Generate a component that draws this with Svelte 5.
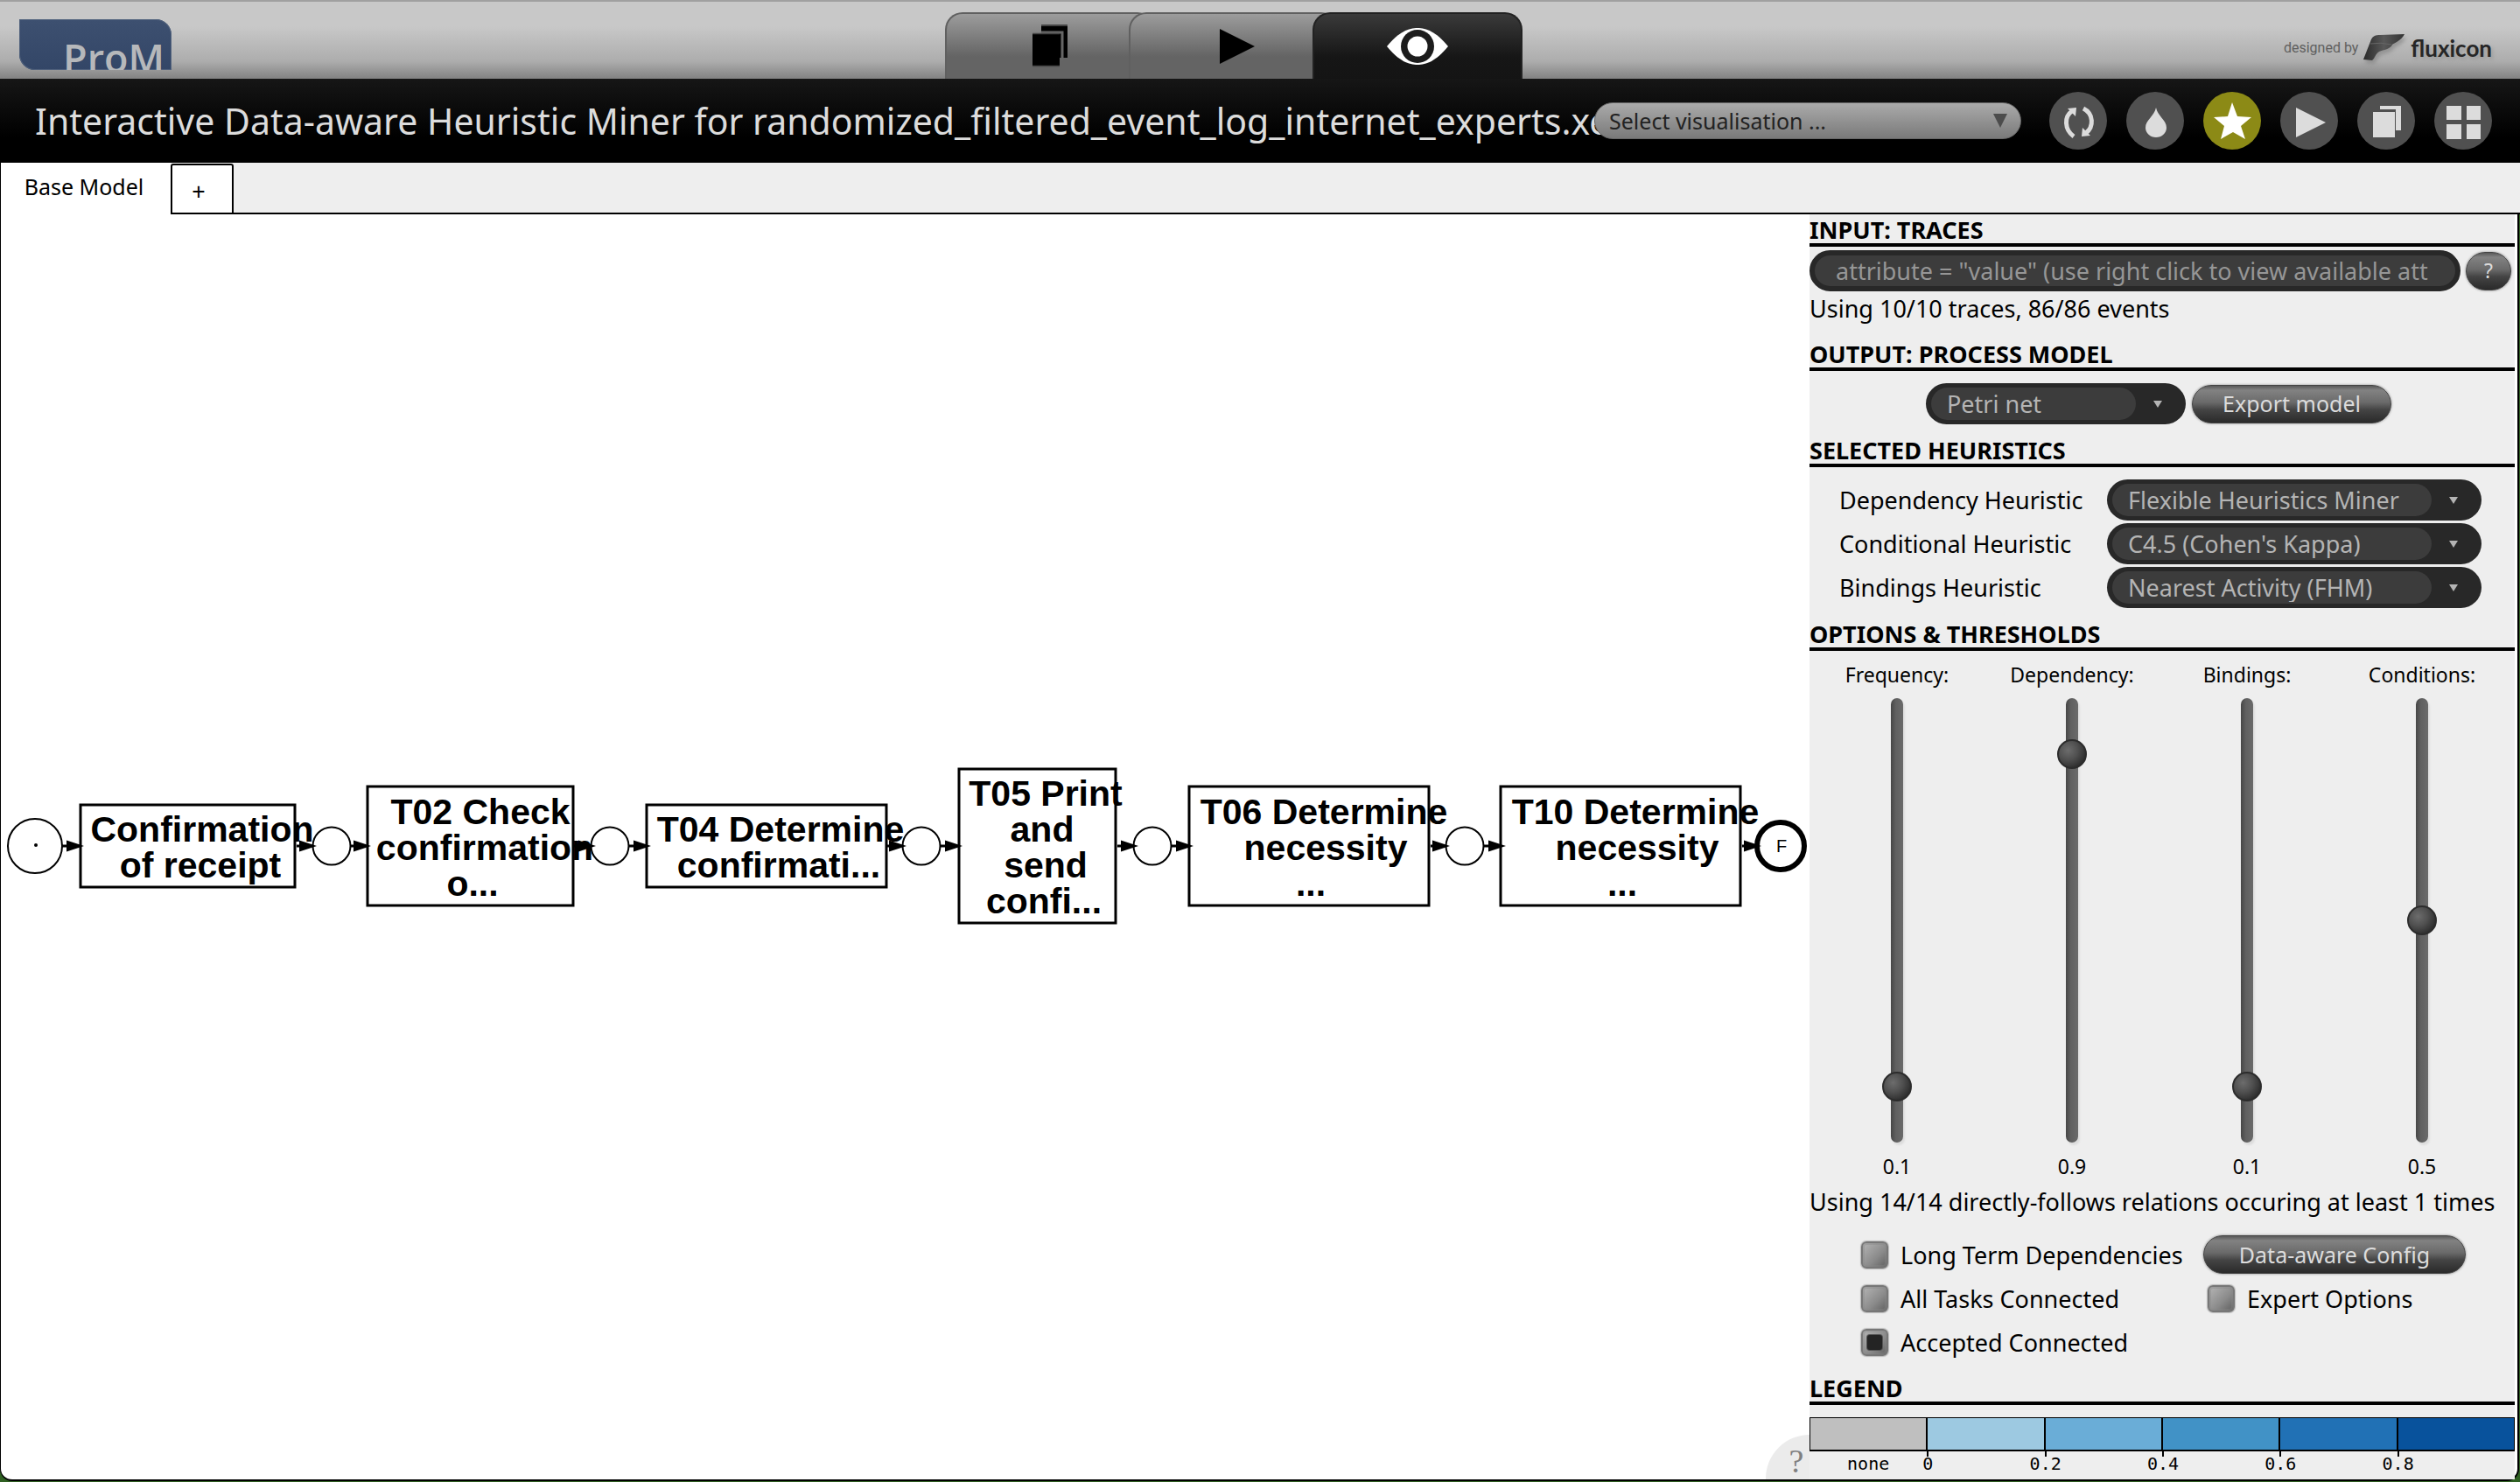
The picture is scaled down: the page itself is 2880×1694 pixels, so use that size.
<script>
  const viewTabs = [
    { id: 'workspace', label: 'Workspace' },
    { id: 'actions', label: 'Actions' },
    { id: 'views', label: 'Views' }
  ];
  let activeView = $state('views');

  const tools = ['Refresh', 'Recolour', 'Favourite', 'Run', 'Duplicate', 'Overview'];

  const heuristics = [
    { id: 'dep', label: 'Dependency Heuristic', value: 'Flexible Heuristics Miner' },
    { id: 'cond', label: 'Conditional Heuristic', value: "C4.5 (Cohen's Kappa)" },
    { id: 'bind', label: 'Bindings Heuristic', value: 'Nearest Activity (FHM)' }
  ];

  let thresholds = $state([
    { id: 'frequency', label: 'Frequency:', value: 0.1 },
    { id: 'dependency', label: 'Dependency:', value: 0.9 },
    { id: 'bindings', label: 'Bindings:', value: 0.1 },
    { id: 'conditions', label: 'Conditions:', value: 0.5 }
  ]);

  const legend = [
    { label: 'none', cls: 'l0' },
    { label: '0', cls: 'l1' },
    { label: '0.2', cls: 'l2' },
    { label: '0.4', cls: 'l3' },
    { label: '0.6', cls: 'l4' },
    { label: '0.8', cls: 'l5' }
  ];

  // Petri net: transitions as boxes, places as circles, on one horizontal axis.
  const axis = 99;
  const transitions = [
    { x: 91, w: 245, h: 94, lines: [['Confirmation', 230], ['of receipt', 228]] },
    { x: 419, w: 235, h: 136, lines: [['T02 Check', 548], ['confirmation', 553], ['o...', 539]] },
    { x: 738, w: 274, h: 94, lines: [['T04 Determine', 891], ['confirmati...', 889]] },
    { x: 1095, w: 179, h: 176, lines: [['T05 Print', 1194], ['and', 1190], ['send', 1194], ['confi...', 1192]] },
    { x: 1358, w: 274, h: 136, lines: [['T06 Determine', 1512], ['necessity', 1514], ['...', 1497]] },
    { x: 1714, w: 274, h: 136, lines: [['T10 Determine', 1868], ['necessity', 1870], ['...', 1853]] }
  ];
  const places = [378, 696, 1052, 1316, 1673];
  const arcs = [
    [70, 94], [338, 360], [400, 422], [655, 679], [718, 742], [1013, 1034],
    [1074, 1098], [1276, 1299], [1338, 1362], [1634, 1655], [1695, 1719], [1990, 2011]
  ];
  const baseline = (t, i) => axis - (t.lines.length * 41) / 2 + 36 + i * 41;
</script>

<div class="window">
  <header class="topbar">
    <div class="brand"><span>ProM</span></div>
    <nav class="views" aria-label="Views">
      {#each viewTabs as tab}
        <button
          class="view"
          class:active={activeView === tab.id}
          aria-label={tab.label}
          onclick={() => (activeView = tab.id)}
        >
          {#if tab.id === 'workspace'}
            <svg width="42" height="50" viewBox="0 0 42 50">
              <path d="M11 1h30v37h-30z" fill="#000" />
              <path d="M11 1h30" stroke="#444" stroke-width="2" />
              <path d="M11 9h24v32" fill="none" stroke="#666" stroke-width="3" />
              <path d="M1 11h31v36h-31z" fill="#000" />
              <path d="M1 47.500h31M1 10.500h31" stroke="#444" stroke-width="1.500" />
            </svg>
          {:else if tab.id === 'actions'}
            <svg width="50" height="42" viewBox="0 0 50 42"><path d="M9 1l40 20-40 20z" fill="#000" /></svg>
          {:else}
            <svg width="70" height="44" viewBox="0 0 70 44">
              <path d="M0 22C14 5 25 1 35 1s21 4 35 21C56 39 45 43 35 43S14 39 0 22z" fill="#fff" />
              <circle cx="35" cy="22" r="19" fill="#1c1c1c" />
              <circle cx="35" cy="22" r="11.500" fill="#fff" />
            </svg>
          {/if}
        </button>
      {/each}
    </nav>
    <div class="credit">
      <span>designed by</span>
      <svg width="50" height="34" viewBox="0 0 50 34">
        <defs>
          <linearGradient id="flag" x1="0" x2="1"><stop offset="0" stop-color="#2a2a2a" /><stop offset=".5" stop-color="#585858" /><stop offset="1" stop-color="#333" /></linearGradient>
        </defs>
        <path d="M10 7C12 3 15 2 20 2L48 1C44 9 36 11 34 13C32 18 24 19 19 21C15 23 14 29 11 31L1 30z" fill="url(#flag)" />
        <path d="M9 12q12-2 24 1" stroke="#666" fill="none" />
      </svg>
      <strong>fluxicon</strong>
    </div>
  </header>

  <div class="titlebar">
    <h1>Interactive Data-aware Heuristic Miner for randomized_filtered_event_log_internet_experts.xes</h1>
    <div class="visualisation">
      <select aria-label="Visualisation"><option>Select visualisation ...</option></select>
      <svg width="16" height="16" viewBox="0 0 16 16"><path d="M0 0h16l-8 16z" fill="#4c4c4c" /></svg>
    </div>
    <div class="tools">
      {#each tools as tool}
        <button class="tool" class:starred={tool === 'Favourite'} aria-label={tool}>
          <svg width="66" height="66" viewBox="0 0 66 66" fill="#dcdcdc">
            {#if tool === 'Refresh'}
              <path d="M28 51C17 43 17 28 26 22" fill="none" stroke="#dcdcdc" stroke-width="5" />
              <path d="M21 19l10-1-1 10z" />
              <path d="M39 19C51 25 51 40 42 47" fill="none" stroke="#dcdcdc" stroke-width="5" />
              <path d="M47 50l-10 1 1-10z" />
            {:else if tool === 'Recolour'}
              <path d="M34 18C36 28 46 32 46 41a12 11 0 0 1-24 0C22 32 32 28 34 18z" />
            {:else if tool === 'Favourite'}
              <path d="M33 12l6 16 16 1-12 10 5 15-14-8-14 8 4-15-12-10 16-1z" fill="#fff" />
            {:else if tool === 'Run'}
              <path d="M18 18l34 17-34 17z" />
            {:else if tool === 'Duplicate'}
              <path d="M26 16h24v28h-6v-24h-18z" />
              <path d="M18 23h25v29h-25z" />
            {:else}
              <path d="M14 16h17v16h-17zM37 16h16v16h-16zM14 37h17v17h-17zM37 37h16v17h-16z" />
            {/if}
          </svg>
        </button>
      {/each}
    </div>
  </div>

  <div class="modeltabs">
    <button class="modeltab">Base Model</button>
    <button class="addtab" aria-label="Add model">+</button>
    <div class="filler"></div>
  </div>

  <main class="workspace">
    <section class="canvas" aria-label="Process model">
      <svg class="net" viewBox="0 0 2067 200">
        <g fill="#fff" stroke="#000" stroke-width="2">
          <circle cx="39" cy={axis} r="31" />
          {#each places as cx}<circle {cx} cy={axis} r="21.500" />{/each}
        </g>
        <circle cx="40" cy="98" r="2" />
        <circle cx="2034" cy={axis} r="27" fill="#fff" stroke="#000" stroke-width="6" />
        <text class="final" x="2035" y="106">F</text>
        {#each transitions as t}
          <rect x={t.x} y={axis - t.h / 2} width={t.w} height={t.h} fill="#fff" stroke="#000" stroke-width="3" />
        {/each}
        {#each arcs as [from, to]}
          <path d="M{from} {axis}H{to - 8}" stroke="#000" stroke-width="3" />
          <path d="M{to + 1} {axis}l-20-6.500v13z" />
        {/each}
        {#each transitions as t}
          {#each t.lines as [line, x], i}
            <text class="task" {x} y={baseline(t, i)}>{line}</text>
          {/each}
        {/each}
      </svg>
      <button class="help">?</button>
    </section>

    <aside class="panel">
      <h2>INPUT: TRACES</h2>
      <div class="filter">
        <input type="text" aria-label="Trace filter" placeholder={'attribute = "value" (use right click to view available att'} />
        <button class="glossy round">?</button>
      </div>
      <p class="note">Using 10/10 traces, 86/86 events</p>

      <h2 class="wide">OUTPUT: PROCESS MODEL</h2>
      <div class="export">
        <div class="combo">
          <select aria-label="Output model"><option>Petri net</option></select>
          <svg width="12" height="10" viewBox="0 0 12 10"><path d="M1 1h10l-5 8z" fill="#b4b4b4" /></svg>
        </div>
        <button class="glossy">Export model</button>
      </div>

      <h2>SELECTED HEURISTICS</h2>
      <div class="heuristics">
        {#each heuristics as h}
          <label for={h.id}>{h.label}</label>
          <div class="combo">
            <select id={h.id}><option>{h.value}</option></select>
            <svg width="12" height="10" viewBox="0 0 12 10"><path d="M1 1h10l-5 8z" fill="#b4b4b4" /></svg>
          </div>
        {/each}
      </div>

      <h2>OPTIONS &amp; THRESHOLDS</h2>
      <div class="sliders">
        {#each thresholds as t}
          <div class="slider">
            <label for={t.id}>{t.label}</label>
            <input id={t.id} type="range" min="0" max="1" step="0.1" bind:value={t.value} />
            <output for={t.id}>{t.value.toFixed(1)}</output>
          </div>
        {/each}
      </div>
      <p class="relations">Using 14/14 directly-follows relations occuring at least 1 times</p>

      <div class="options">
        <label><input type="checkbox" />Long Term Dependencies</label>
        <button class="glossy">Data-aware Config</button>
        <label><input type="checkbox" />All Tasks Connected</label>
        <label class="expert"><input type="checkbox" />Expert Options</label>
        <label><input type="checkbox" checked />Accepted Connected</label>
      </div>

      <h2 class="legendtitle">LEGEND</h2>
      <div class="scale">
        {#each legend as item}<div class={item.cls}></div>{/each}
      </div>
      <div class="ticks">
        {#each legend as item}<div><span>{item.label}</span></div>{/each}
      </div>
    </aside>
  </main>
</div>

<style>
  :global(body) { margin: 0; }
  *, *::before { box-sizing: border-box; }
  button, select, input { font: inherit; border: 0; margin: 0; padding: 0; }
  .window {
    min-height: 100vh;
    display: flex;
    flex-direction: column;
    font-family: 'Noto Sans', 'Open Sans', sans-serif;
    font-size: 27px;
    line-height: 33px;
    color: #000;
    background: #2f6022;
  }

  .topbar {
    height: 90px;
    display: grid;
    grid-template-columns: 36fr auto 38fr;
    border-top: 2px solid #a0a0a0;
    background: linear-gradient(#c8c8c8 0, #c8c8c8 28px, #adadad 68px, #828282 88px);
  }
  .brand {
    align-self: start;
    width: 174px;
    height: 58px;
    margin: 20px 0 0 22px;
    padding: 19px 8px 0 0;
    overflow: hidden;
    border-radius: 0 18px 0 18px;
    background: linear-gradient(#3d5070, #334667);
    box-shadow: inset 0 0 0 1px #50617c;
    color: #b6b8bb;
    font: 600 45px/50px 'Open Sans', sans-serif;
    text-align: right;
  }
  .views { display: flex; align-items: flex-end; }
  .view {
    width: 240px;
    height: 76px;
    display: flex;
    align-items: center;
    justify-content: center;
    border: 2px solid #606060;
    border-bottom: 0;
    border-radius: 20px 20px 0 0;
    background: linear-gradient(#9c9c9c, #646464 66%, #646464);
  }
  .view + .view { margin-left: -30px; }
  .view.active { border-color: #222; background: linear-gradient(#3a3a3a, #161616 66%, #141414); }
  .credit {
    justify-self: end;
    align-self: start;
    display: flex;
    align-items: center;
    gap: 5px;
    margin: 36px 32px 0 0;
    color: #606060;
    font: 16px/34px Roboto, sans-serif;
  }
  .credit strong { font: 700 26px/32px Lato, sans-serif; color: #262626; text-shadow: 2px 3px 4px #8889; }
  .credit svg { filter: drop-shadow(2px 4px 2px #7778); }

  .titlebar {
    height: 96px;
    display: flex;
    align-items: center;
    padding: 0 32px 0 40px;
    background: linear-gradient(#161616, #000 70%);
  }
  h1 {
    flex: 1;
    min-width: 0;
    margin: 0;
    overflow: hidden;
    white-space: nowrap;
    color: #dcdcdc;
    font-size: 41px;
    font-weight: 400;
    line-height: 58px;
  }
  .visualisation {
    flex: 0 0 488px;
    position: relative;
    display: flex;
    align-items: center;
    height: 42px;
    margin-left: -12px;
    padding-right: 15px;
    border-radius: 21px;
    border: 1px solid #666;
    background: linear-gradient(#aaa, #7a7a7a);
  }
  .visualisation select {
    flex: 1;
    appearance: none;
    height: 40px;
    padding-left: 16px;
    background: none;
    color: #222;
    font-size: 25px;
  }
  .tools { display: flex; gap: 22px; margin-left: 32px; }
  .tool { width: 66px; height: 66px; border-radius: 50%; background: #505050; }
  .tool svg { display: block; }
  .tool.starred { background: #8c8a16; }

  .modeltabs { display: flex; height: 59px; background: #eee; }
  .modeltab {
    width: 195px;
    padding: 0 4px 4px 0;
    border-left: 1px solid #000;
    background: #fff;
    text-align: center;
    font-size: 25px;
  }
  .addtab {
    width: 72px;
    margin-top: 1px;
    padding: 4px 8px 0 0;
    border: 2px solid #000;
    border-radius: 3px 3px 0 0;
    background: #fff;
  }
  .filler { flex: 1; border-bottom: 2px solid #000; }

  .workspace {
    flex: 1;
    display: flex;
    padding-right: 3px;
    border: solid #000;
    border-width: 0 2px 2px 1px;
    border-radius: 0 0 14px 14px;
    background: #fff;
    margin: 0 1px 1px 0;
  }
  .canvas {
    flex: 1;
    min-width: 0;
    position: relative;
    display: flex;
    align-items: center;
    overflow: hidden;
  }
  .net { width: 100%; overflow: visible; }
  .task { font: 700 41px 'Liberation Sans', sans-serif; text-anchor: middle; }
  .final { font: 20px 'Liberation Sans', sans-serif; text-anchor: middle; }
  .help {
    position: absolute;
    right: 0;
    bottom: 0;
    width: 50px;
    height: 51px;
    padding: 8px 0 0 20px;
    border-radius: 50px 0 0 0;
    background: #ebebeb;
    color: #808080;
    font: 38px/40px 'Liberation Serif', serif;
  }

  .panel { flex: 0 0 806px; display: flex; flex-direction: column; background: #eee; }
  h2 {
    margin: 12px 0 0;
    padding-top: 2px;
    border-bottom: 4px solid #000;
    font-size: 27px;
    font-weight: 700;
    line-height: 31px;
  }
  h2:first-child { margin-top: 0; }
  h2.wide { margin-top: 18px; }
  h2.legendtitle { margin-top: 10px; }
  p { margin: 0; white-space: nowrap; }

  .filter { display: flex; align-items: center; gap: 6px; padding: 4px 4px 0 0; }
  .filter input {
    flex: 1;
    min-width: 0;
    height: 47px;
    padding: 0 24px;
    border: 6px solid #282828;
    border-radius: 24px;
    background: #3c3c3c;
  }
  .filter input::placeholder { color: #969696; opacity: 1; }
  .note { margin-top: 3px; }
  .glossy {
    height: 44px;
    padding: 0 36px;
    border: 1px solid #444;
    border-radius: 22px;
    background: linear-gradient(#5a5a5a, #828282 12%, #6a6a6a 45%, #444 65%, #2a2a2a);
    box-shadow: 0 0 2px 1px #bbb;
    color: #dcdcdc;
    font-size: 25px;
  }
  .glossy.round { width: 52px; padding: 0; font-size: 23px; }

  .combo {
    display: flex;
    align-items: center;
    gap: 19px;
    height: 47px;
    padding: 0 26px 0 6px;
    border-radius: 24px;
    background: #282828;
  }
  .combo select {
    flex: 1;
    min-width: 0;
    height: 37px;
    padding-left: 18px;
    appearance: none;
    border-radius: 19px;
    background: #3c3c3c;
    color: #b4b4b4;
  }
  .export { display: flex; align-items: center; justify-content: center; gap: 7px; padding: 14px 8px 0 0; }
  .export .combo { width: 297px; }
  .export .glossy { width: 228px; padding: 0; }
  .heuristics {
    display: grid;
    grid-template-columns: 306px 1fr;
    align-items: center;
    row-gap: 3px;
    padding: 14px 38px 0 34px;
  }

  .sliders { display: grid; grid-template-columns: repeat(4, 1fr); margin-top: 13px; padding-right: 6px; }
  .slider { display: flex; flex-direction: column; align-items: center; gap: 13px; font-size: 23px; line-height: 28px; }
  .slider input {
    appearance: none;
    writing-mode: vertical-lr;
    direction: rtl;
    width: 34px;
    height: 508px;
    background: none;
  }
  .slider input::-webkit-slider-runnable-track {
    width: 14px;
    height: 508px;
    border-radius: 7px;
    background: linear-gradient(90deg, #464646, #606060 40%, #6a6a6a);
    box-shadow: 2px 3px 2px #ddd;
  }
  .slider input::-webkit-slider-thumb {
    appearance: none;
    width: 34px;
    height: 34px;
    margin-left: -10px;
    border: 2px solid #2c2c2c;
    border-radius: 50%;
    background: radial-gradient(circle at 35% 35%, #6c6c6c, #505050 40%, #181818);
  }
  .relations { margin-top: 10px; }

  .options {
    display: grid;
    grid-template-columns: 391px 300px;
    grid-auto-rows: 50px;
    align-items: center;
    margin-top: 19px;
    padding-left: 59px;
  }
  .options label { display: flex; align-items: center; gap: 14px; white-space: nowrap; }
  .options .expert { padding-left: 5px; }
  .options .glossy { padding: 0; }
  .options input {
    appearance: none;
    display: grid;
    place-items: center;
    width: 31px;
    height: 31px;
    border: 2px solid #777;
    border-radius: 6px;
    background: linear-gradient(135deg, #b4b4b4, #8a8a8a 60%, #606060);
    box-shadow: inset 0 0 0 2px #8886, 0 0 1px 1px #bbb;
  }
  .options input:checked::before {
    content: '';
    width: 17px;
    height: 17px;
    border-radius: 3px;
    background: #242424;
    box-shadow: 0 0 0 1px #555;
  }

  .scale { display: flex; height: 39px; margin: 14px 0 0; border: solid #000; border-width: 1px 1px 2px; }
  .scale div { flex: 1; }
  .scale div + div { border-left: 2px solid #000; }
  .l0 { background: #bfbfbf; }
  .l1 { background: #9dc9e1; }
  .l2 { background: #6aadd7; }
  .l3 { background: #4192c6; }
  .l4 { background: #2171b5; }
  .l5 { background: #08529c; }
  .ticks {
    display: flex;
    font: 20px/28px 'DejaVu Sans Mono', monospace;
    padding-bottom: 4px;
  }
  .ticks div { flex: 1; position: relative; display: flex; justify-content: center; }
  .ticks div + div { justify-content: flex-start; }
  .ticks div + div span { width: 2px; display: flex; justify-content: center; }
  .ticks div + div::before { content: ''; position: absolute; left: 0; top: 0; width: 2px; height: 6px; background: #000; }
</style>
